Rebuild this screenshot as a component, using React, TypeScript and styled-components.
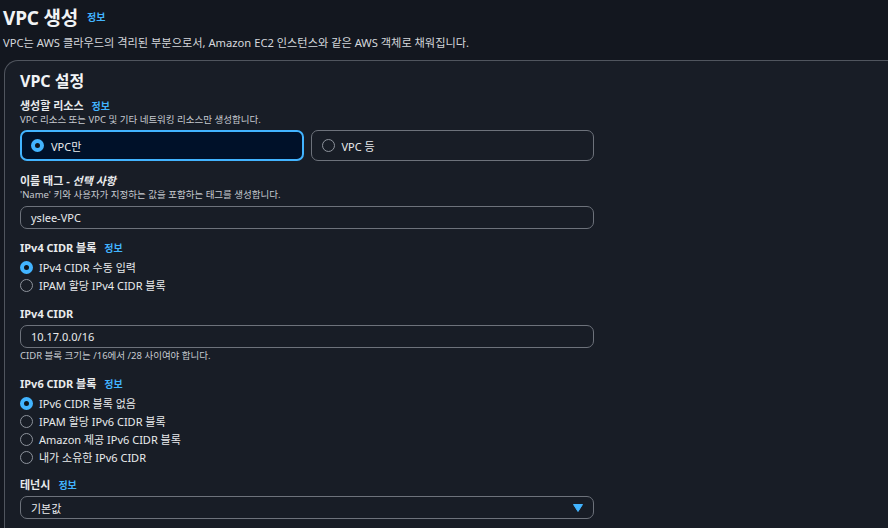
import React from "react";
import styled, { createGlobalStyle } from "styled-components";

const Global = createGlobalStyle`
  html, body { margin: 0; padding: 0; background: #13171f; }
  body {
    font-family: "Noto Sans", "Noto Sans CJK KR", sans-serif;
    color: #dbdee2;
    overflow: hidden;
  }
`;

const Page = styled.div`
  width: 888px;
  height: 528px;
  padding: 0 0 0 4px;
  box-sizing: border-box;
  overflow: hidden;
`;

const TitleRow = styled.div`
  display: flex;
  align-items: center;
  gap: 9px;
  padding-top: 4px;
  margin-left: -1px;
`;

const Title = styled.h1`
  margin: 0;
  font-size: 19px;
  letter-spacing: -0.2px;
  font-weight: 700;
  color: #f1f3f5;
  line-height: 28px;
`;

const Info = styled.a`
  font-size: 10px;
  font-weight: 700;
  color: #42b4ff;
  text-decoration: none;
`;

const TitleInfo = styled(Info)`
  margin-top: -3px;
`;

const Lead = styled.p`
  margin: 3px 0 0 -1px;
  font-size: 11.2px;
  line-height: 16px;
  color: #d5d8dc;
`;

const Panel = styled.section`
  margin-top: 9px;
  background: #181d26;
  border: 1px solid #50555e;
  border-right: none;
  border-bottom: none;
  border-radius: 14px 0 0 0;
  padding: 9px 0 20px 15px;
  height: 600px;
`;

const PanelTitle = styled.h2`
  margin: 0;
  font-size: 16px;
  font-weight: 700;
  color: #f1f3f5;
  line-height: 22px;
`;

const Field = styled.div<{ $mt?: number }>`
  width: 574px;
  margin-top: ${(p) => p.$mt ?? 16}px;
`;

const LabelRow = styled.div`
  display: flex;
  align-items: baseline;
  gap: 8px;
`;

const Label = styled.div`
  font-size: 11px;
  font-weight: 700;
  color: #e9ebed;
  line-height: 15px;
  em { font-style: italic; }
`;

const Desc = styled.div`
  font-size: 9.5px;
  color: #c6cad0;
  line-height: 14px;
`;

const Tiles = styled.div`
  display: grid;
  grid-template-columns: 1fr 1fr;
  gap: 7px;
  margin-top: 3px;
`;

const Tile = styled.div<{ $sel?: boolean }>`
  height: 31px;
  box-sizing: border-box;
  border-radius: 7px;
  border: ${(p) => (p.$sel ? "2px solid #42b4ff" : "1px solid #6d727b")};
  background: ${(p) => (p.$sel ? "#001129" : "transparent")};
  display: flex;
  align-items: center;
  gap: 7px;
  padding-left: ${(p) => (p.$sel ? "9px" : "10px")};
  font-size: 11px;
  color: #e9ebed;
`;

const Dot = styled.span<{ $sel?: boolean }>`
  width: 13px;
  height: 13px;
  box-sizing: border-box;
  border-radius: 50%;
  flex: none;
  ${(p) =>
    p.$sel
      ? `background: #0f141a; border: 4px solid #42b4ff;`
      : `border: 1.5px solid #8d939c;`}
`;

const Input = styled.div`
  margin-top: 4px;
  height: 23px;
  box-sizing: border-box;
  border: 1px solid #6d727b;
  border-radius: 7px;
  display: flex;
  align-items: center;
  padding: 0 10px;
  font-size: 11px;
  color: #e9ebed;
  justify-content: space-between;
`;

const Help = styled.div`
  margin-top: 1px;
  font-size: 9.5px;
  color: #c6cad0;
  line-height: 13px;
`;

const RadioList = styled.div`
  display: flex;
  flex-direction: column;
  gap: 4px;
  margin-top: 5px;
`;

const RadioRow = styled.div`
  display: flex;
  align-items: center;
  gap: 6px;
  height: 14px;
  font-size: 11px;
  color: #e9ebed;
`;

const Caret = () => (
  <svg width="10" height="8" viewBox="0 0 10 8">
    <path d="M0.5 0.5 H9.5 L5 7.5 Z" fill="#42b4ff" stroke="#42b4ff" strokeLinejoin="round" />
  </svg>
);

export default function App() {
  return (
    <Page>
      <Global />
      <TitleRow>
        <Title>VPC 생성</Title>
        <TitleInfo>정보</TitleInfo>
      </TitleRow>
      <Lead>VPC는 AWS 클라우드의 격리된 부분으로서, Amazon EC2 인스턴스와 같은 AWS 객체로 채워집니다.</Lead>
      <Panel>
        <PanelTitle>VPC 설정</PanelTitle>
        <Field $mt={6}>
          <LabelRow>
            <Label>생성할 리소스</Label>
            <Info>정보</Info>
          </LabelRow>
          <Desc>VPC 리소스 또는 VPC 및 기타 네트워킹 리소스만 생성합니다.</Desc>
          <Tiles>
            <Tile $sel>
              <Dot $sel />
              VPC만
            </Tile>
            <Tile>
              <Dot />
              VPC 등
            </Tile>
          </Tiles>
        </Field>
        <Field $mt={12}>
          <Label>
            이름 태그 - <em>선택 사항</em>
          </Label>
          <Desc>'Name' 키와 사용자가 지정하는 값을 포함하는 태그를 생성합니다.</Desc>
          <Input>yslee-VPC</Input>
        </Field>
        <Field $mt={11}>
          <LabelRow>
            <Label>IPv4 CIDR 블록</Label>
            <Info>정보</Info>
          </LabelRow>
          <RadioList>
            <RadioRow>
              <Dot $sel />
              IPv4 CIDR 수동 입력
            </RadioRow>
            <RadioRow>
              <Dot />
              IPAM 할당 IPv4 CIDR 블록
            </RadioRow>
          </RadioList>
        </Field>
        <Field $mt={14}>
          <Label>IPv4 CIDR</Label>
          <Input>10.17.0.0/16</Input>
          <Help>CIDR 블록 크기는 /16에서 /28 사이여야 합니다.</Help>
        </Field>
        <Field $mt={14}>
          <LabelRow>
            <Label>IPv6 CIDR 블록</Label>
            <Info>정보</Info>
          </LabelRow>
          <RadioList>
            <RadioRow>
              <Dot $sel />
              IPv6 CIDR 블록 없음
            </RadioRow>
            <RadioRow>
              <Dot />
              IPAM 할당 IPv6 CIDR 블록
            </RadioRow>
            <RadioRow>
              <Dot />
              Amazon 제공 IPv6 CIDR 블록
            </RadioRow>
            <RadioRow>
              <Dot />
              내가 소유한 IPv6 CIDR
            </RadioRow>
          </RadioList>
        </Field>
        <Field $mt={13}>
          <LabelRow>
            <Label>테넌시</Label>
            <Info>정보</Info>
          </LabelRow>
          <Input>
            기본값
            <Caret />
          </Input>
        </Field>
      </Panel>
    </Page>
  );
}
